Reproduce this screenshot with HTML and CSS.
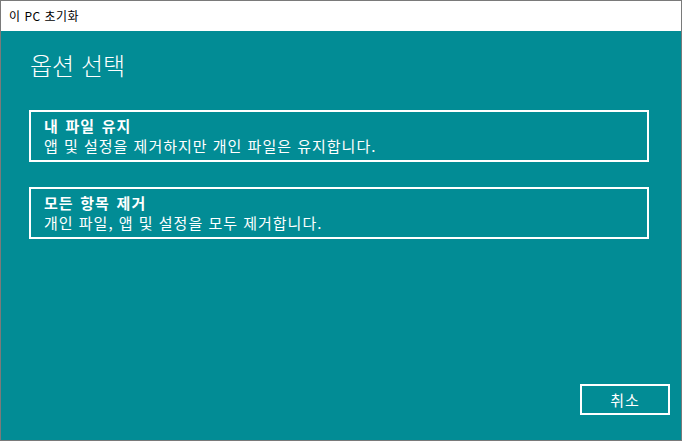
FILE: index.html
```html
<!DOCTYPE html>
<html lang="ko">
<head>
<meta charset="utf-8">
<title>이 PC 초기화</title>
<link rel="stylesheet" href="styles.css">
</head>
<body>
<div class="window">
  <div class="titlebar">이 PC 초기화</div>
  <div class="content">
    <h1 class="heading">옵션 선택</h1>
    <div class="options">
      <div class="option">
        <div class="option-title">내 파일 유지</div>
        <div class="option-desc">앱 및 설정을 제거하지만 개인 파일은 유지합니다.</div>
      </div>
      <div class="option">
        <div class="option-title">모든 항목 제거</div>
        <div class="option-desc">개인 파일, 앱 및 설정을 모두 제거합니다.</div>
      </div>
    </div>
    <div class="footer">
      <div class="btn">취소</div>
    </div>
  </div>
</div>
</body>
</html>
```
FILE: styles.css
```css
html, body {
  margin: 0;
  padding: 0;
}
body {
  font-family: "Noto Sans CJK KR", "Noto Sans", sans-serif;
  background: #ffffff;
}
.window {
  width: 682px;
  height: 441px;
  box-sizing: border-box;
  border: 1px solid #7a7a7a;
  display: flex;
  flex-direction: column;
}
.titlebar {
  height: 30px;
  line-height: 30px;
  font-size: 12px;
  letter-spacing: 0.5px;
  color: #000;
  background: #fff;
  padding-left: 8px;
  flex: none;
}
.content {
  flex: 1;
  background: #028c95;
  color: #fff;
  display: flex;
  flex-direction: column;
  padding: 18px 11px 25px 28px;
}
.heading {
  margin: 0;
  font-size: 24px;
  line-height: 32px;
  font-weight: 300;
  padding-left: 1px;
}
.options {
  margin-top: 29px;
  margin-right: 21px;
  display: flex;
  flex-direction: column;
  gap: 25px;
}
.option {
  border: 2px solid #fff;
  padding: 4px 12px 4px 13px;
}
.option-title {
  font-size: 15px;
  line-height: 20px;
  font-weight: 700;
  letter-spacing: 1px;
  word-spacing: 1.5px;
}
.option-desc {
  font-size: 15px;
  line-height: 20px;
  letter-spacing: 1px;
}
.footer {
  margin-top: auto;
  display: flex;
  justify-content: flex-end;
}
.btn {
  width: 90px;
  height: 31px;
  box-sizing: border-box;
  border: 2px solid #fff;
  text-align: center;
  font-size: 15px;
  line-height: 27px;
  letter-spacing: 1px;
}
```
